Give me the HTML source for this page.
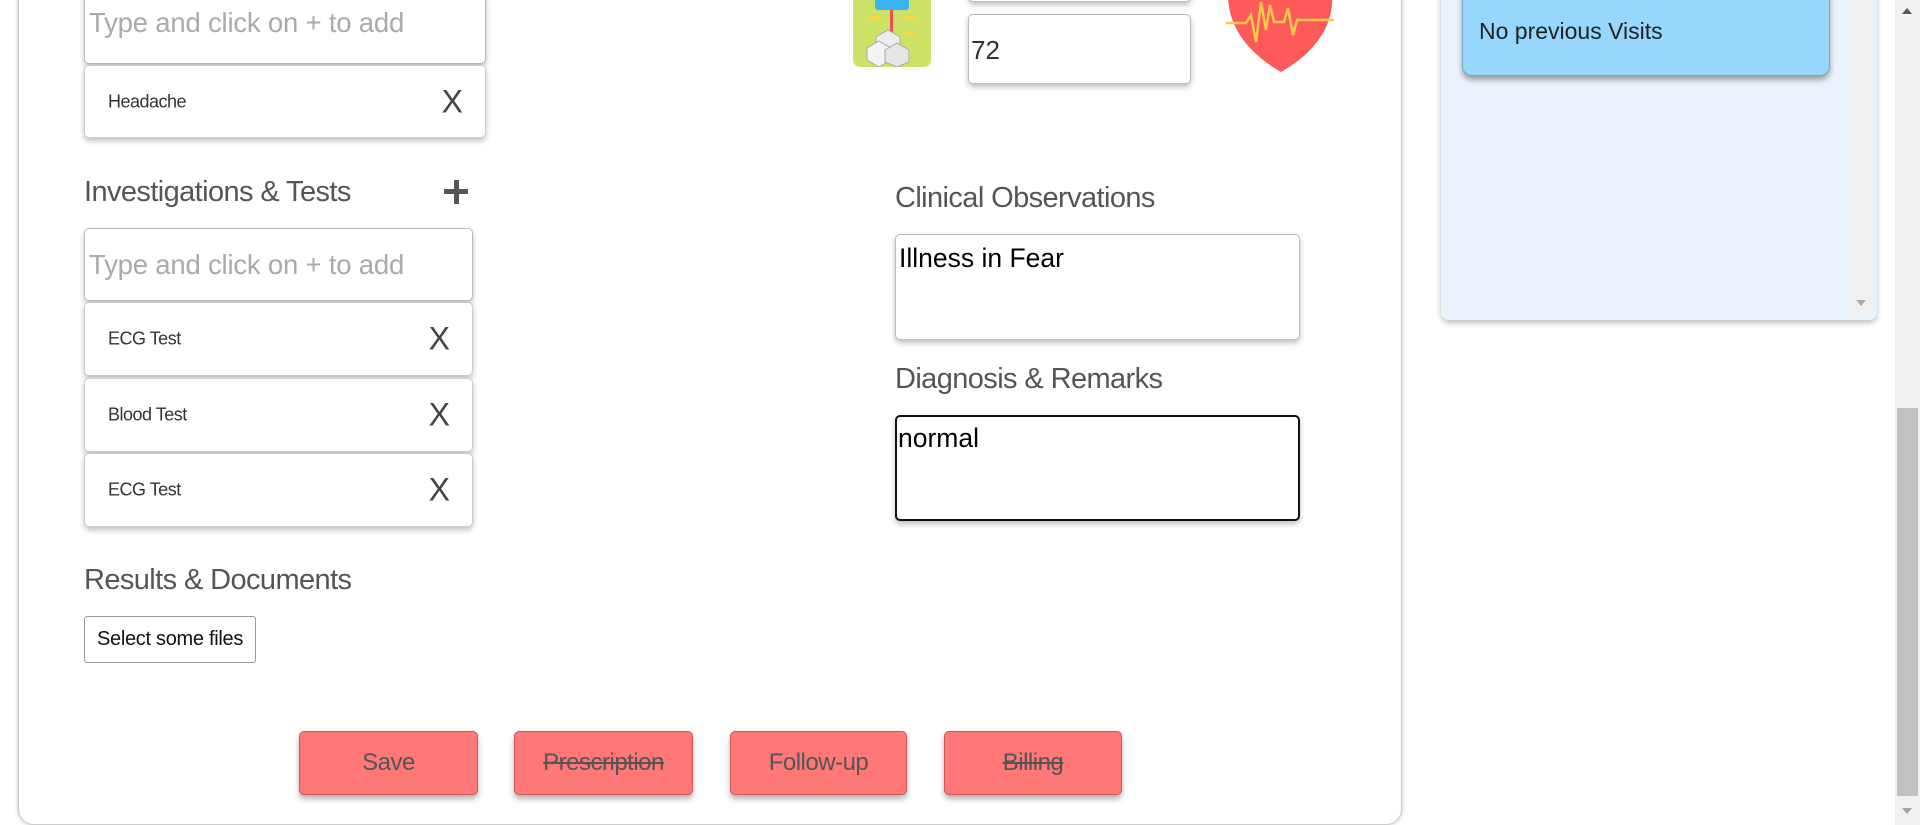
<!DOCTYPE html>
<html><head><meta charset="utf-8">
<style>
*{box-sizing:border-box;margin:0;padding:0}
body{width:1920px;height:825px;overflow:hidden;background:#fff;position:relative;font-family:"Liberation Sans",sans-serif}
.abs{position:absolute}
.card{position:absolute;left:18px;top:-20px;width:1384px;height:845px;border:1px solid #ccc;border-radius:0 0 16px 16px;box-shadow:0 0 4px rgba(0,0,0,.25);background:#fff}
.inp{position:absolute;background:#fff;border:1px solid #bbb;border-radius:5px;box-shadow:0 3px 6px rgba(0,0,0,.25)}
.ph{color:#aaa;font-size:27.5px;letter-spacing:-0.2px}
.item{position:absolute;background:#fff;border:1px solid #ccc;border-radius:5px;box-shadow:0 3px 6px rgba(0,0,0,.25)}
.item span{position:absolute;left:23px;top:50%;transform:translateY(-50%);font-size:18px;color:#333;letter-spacing:-0.5px}
.item b{position:absolute;right:22px;top:50%;transform:translateY(-50%);font-weight:normal;font-size:32px;color:#444}
.h{position:absolute;font-size:29px;color:#555;letter-spacing:-0.6px}
.btn{position:absolute;top:731px;height:64px;background:#ff7777;border:1px solid #d05555;border-radius:5px;box-shadow:0 4px 6px rgba(0,0,0,.3);color:#555;font-size:24px;text-align:center;line-height:62px;letter-spacing:-0.5px}
</style></head><body>
<div class="card"></div>

<div class="inp" style="left:84px;top:-10px;width:402px;height:74px"><div class="ph abs" style="left:4px;top:16px">Type and click on + to add</div></div>
<div class="item" style="left:84px;top:65px;width:402px;height:73px"><span>Headache</span><b>X</b></div>

<div class="h" style="left:84px;top:176px">Investigations &amp; Tests</div>
<div class="abs" style="left:444px;top:180px;width:24px;height:24px">
<div class="abs" style="left:0;top:9px;width:24px;height:5px;background:#555"></div>
<div class="abs" style="left:9.5px;top:0;width:5px;height:24px;background:#555"></div></div>

<div class="inp" style="left:84px;top:228px;width:389px;height:73px"><div class="ph abs" style="left:4px;top:20px">Type and click on + to add</div></div>
<div class="item" style="left:84px;top:302px;width:389px;height:74px"><span>ECG Test</span><b>X</b></div>
<div class="item" style="left:84px;top:378px;width:389px;height:74px"><span>Blood Test</span><b>X</b></div>
<div class="item" style="left:84px;top:453px;width:389px;height:74px"><span>ECG Test</span><b>X</b></div>

<div class="h" style="left:84px;top:564px">Results &amp; Documents</div>
<div class="abs" style="left:84px;top:616px;width:172px;height:47px;border:1px solid #999;border-radius:3px;font-size:20px;line-height:45px;text-align:center;color:#111;letter-spacing:-0.3px">Select some files</div>

<div class="btn" style="left:299px;width:179px">Save</div>
<div class="btn" style="left:514px;width:179px;text-decoration:line-through">Prescription</div>
<div class="btn" style="left:730px;width:177px">Follow-up</div>
<div class="btn" style="left:944px;width:178px;text-decoration:line-through">Billing</div>

<svg class="abs" style="left:853px;top:0" width="78" height="67" viewBox="0 0 78 67">
<rect x="0" y="-10" width="78" height="77" rx="7" fill="#cde264"/>
<rect x="22" y="-6" width="34" height="16" rx="3" fill="#3bb3f5"/>
<rect x="37" y="10" width="3" height="22" fill="#f04e4e"/>
<rect x="15" y="16" width="14" height="4" rx="2" fill="#f7d64a"/><rect x="49" y="16" width="14" height="4" rx="2" fill="#f7d64a"/>
<rect x="52" y="32" width="10" height="4" rx="2" fill="#f7d64a"/>
<path d="M23 37l12-7 12 7v12l-12 7-12-7z" fill="#eee" stroke="#aaa"/>
<path d="M14 48l12-7 12 7v12l-12 7-12-7z" fill="#f3f3f3" stroke="#aaa"/>
<path d="M32 50l12-7 12 7v12l-12 5-12-5z" fill="#e6e6e6" stroke="#aaa"/>
</svg>
<div class="inp" style="left:968px;top:-20px;width:223px;height:22px"></div>
<div class="inp" style="left:968px;top:14px;width:223px;height:70px"><div class="abs" style="left:2px;top:20px;font-size:26px;color:#333">72</div></div>
<svg class="abs" style="left:1226px;top:0" width="110" height="73" viewBox="0 0 110 73">
<path d="M2 -5 L106 -5 C108 25 90 52 55 72 C20 52 2 25 2 -5z" fill="#ff5a5a"/>
<path d="M0 23 H20 L25 15 L30 42 L35 2 L40 30 L44 5 L48 22 H58 L62 8 L67 35 L71 20 H108" fill="none" stroke="#f9c94a" stroke-width="2.5"/>
</svg>

<div class="h" style="left:895px;top:182px">Clinical Observations</div>
<div class="inp" style="left:895px;top:234px;width:405px;height:106px"><div class="abs" style="left:3px;top:8px;font-size:26.5px;color:#000">Illness in Fear</div></div>
<div class="h" style="left:895px;top:363px">Diagnosis &amp; Remarks</div>
<div class="inp" style="left:895px;top:415px;width:405px;height:106px;border:2px solid #111"><div class="abs" style="left:1px;top:6px;font-size:26.5px;color:#000">normal</div></div>

<div class="abs" style="left:1441px;top:-20px;width:436px;height:340px;background:#eaf3fb;border-radius:0 0 8px 8px;box-shadow:0 3px 6px rgba(0,0,0,.25)"></div>
<div class="abs" style="left:1851px;top:0;width:22px;height:316px;background:#f0f0f0"></div>
<div class="abs" style="left:1856px;top:300px;width:0;height:0;border-left:5px solid transparent;border-right:5px solid transparent;border-top:6px solid #aaa"></div>
<div class="abs" style="left:1462px;top:-20px;width:368px;height:96px;background:#97d7fd;border:1px solid #7ab;border-radius:0 0 10px 10px;box-shadow:0 4px 6px rgba(0,0,0,.35)"><div class="abs" style="left:16px;top:37px;font-size:23px;color:#222">No previous Visits</div></div>

<div class="abs" style="left:1895px;top:0;width:25px;height:825px;background:#f1f1f1"></div>
<div class="abs" style="left:1897px;top:408px;width:21px;height:388px;background:#c1c1c1"></div>
<div class="abs" style="left:1902px;top:8px;width:0;height:0;border-left:5px solid transparent;border-right:5px solid transparent;border-bottom:6px solid #555"></div>
<div class="abs" style="left:1902px;top:808px;width:0;height:0;border-left:5px solid transparent;border-right:5px solid transparent;border-top:6px solid #a3a3a3"></div>
</body></html>
